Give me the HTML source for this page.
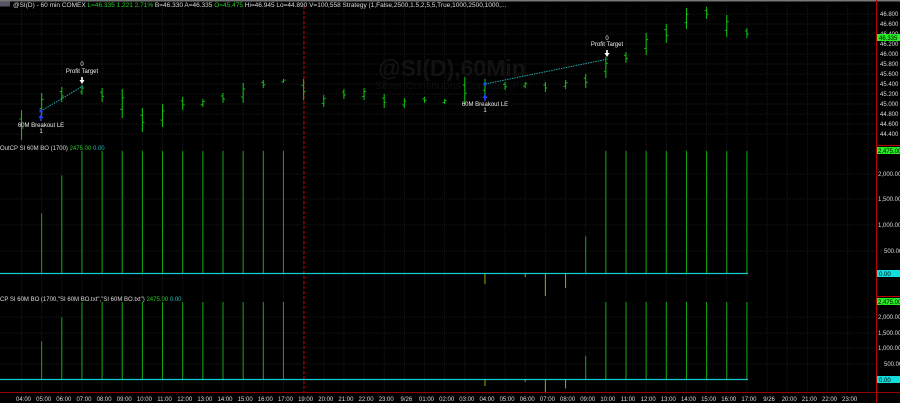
<!DOCTYPE html>
<html><head><meta charset="utf-8"><style>
html,body{margin:0;padding:0;background:#000;width:900px;height:403px;overflow:hidden}
svg{display:block}
text{font-family:"Liberation Sans",sans-serif}
</style></head><body>
<svg id="s" width="900" height="403" viewBox="0 0 900 403" xmlns="http://www.w3.org/2000/svg">
<rect width="900" height="403" fill="#000"/>
<rect width="900" height="1.5" fill="#777"/>
<g id="grid"></g>
<text x="452" y="76" font-size="23" font-weight="bold" fill="#121212" text-anchor="middle">@SI(D),60Min</text>
<text x="452" y="89" font-size="11" fill="#0e0e0e" text-anchor="middle">Silver Continuous Contract (Pit)</text>
<line x1="304" y1="6" x2="304" y2="393" stroke="#c00" stroke-width="1" stroke-dasharray="3,2"/>
<g id="bars"></g>
<!-- header -->
<rect x="0" y="1.5" width="10" height="5" fill="#556"/>
<text x="13" y="7" font-size="6.5" fill="#ddd">@SI(D) - 60 min  COMEX <tspan fill="#2c2">L=46.335  1.221  2.71%</tspan>  B=46.330  A=46.335 <tspan fill="#2c2"> O=45.475</tspan>  Hi=46.945  Lo=44.890  V=100,558  Strategy (1,False,2500,1.5,2,5,5,True,1000,2500,1000,...</text>
<!-- trades -->
<line x1="41" y1="111" x2="83" y2="86" stroke="#2aa" stroke-width="1" stroke-dasharray="1.5,1"/>
<line x1="485" y1="84" x2="608" y2="59" stroke="#2aa" stroke-width="1" stroke-dasharray="1.5,1"/>
<rect x="39.5" y="109.5" width="3" height="3" fill="#24f"/>
<path d="M41 114 L38.5 118 L40.2 118 L40.2 121 L41.8 121 L41.8 118 L43.5 118Z" fill="#24f"/>
<rect x="483.5" y="82.5" width="3" height="3" fill="#24f"/>
<path d="M485 94 L482.5 98 L484.2 98 L484.2 101 L485.8 101 L485.8 98 L487.5 98Z" fill="#24f"/>
<path d="M82 84 L79.5 80 L81.2 80 L81.2 77 L82.8 77 L82.8 80 L84.5 80Z" fill="#fff"/>
<path d="M607 57 L604.5 53 L606.2 53 L606.2 50 L607.8 50 L607.8 53 L609.5 53Z" fill="#fff"/>
<g font-size="6" fill="#eee" text-anchor="middle">
<text x="41" y="127">60M Breakout LE</text><text x="41" y="133">1</text>
<text x="82" y="66">0</text><text x="82" y="73">Profit Target</text>
<text x="485" y="106">60M Breakout LE</text><text x="485" y="112">1</text>
<text x="607" y="40">0</text><text x="607" y="46">Profit Target</text>
</g>
<!-- panel titles -->
<text x="0" y="150" font-size="6" fill="#ddd">OutCP SI 60M BO (1700) <tspan fill="#2c2">  2475.00 </tspan><tspan fill="#2bb"> 0.00</tspan></text>
<text x="0" y="301" font-size="6" fill="#ddd">CP SI 60M BO (1700,"SI 60M BO.txt","SI 60M BO.txt") <tspan fill="#2c2">  2475.00 </tspan><tspan fill="#2bb"> 0.00</tspan></text>
<line x1="0" y1="273.5" x2="748" y2="273.5" stroke="#1cc" stroke-width="1.3"/>
<line x1="0" y1="379.5" x2="748" y2="379.5" stroke="#1cc" stroke-width="1.3"/>
<!-- axis -->
<line x1="876.5" y1="0" x2="876.5" y2="403" stroke="#b00" stroke-width="1"/>
<line x1="876" y1="145.5" x2="900" y2="145.5" stroke="#b00"/>
<line x1="876" y1="296.5" x2="900" y2="296.5" stroke="#b00"/>
<line x1="0" y1="392.5" x2="900" y2="392.5" stroke="#900"/>
<g id="axis" font-size="6" fill="#ddd"></g>
<rect x="877" y="34" width="23" height="7" fill="#2e2"/><text x="879" y="40" font-size="6" fill="#000">46.335</text>
<rect x="877" y="147" width="23" height="7" fill="#2e2"/><text x="878" y="153" font-size="6" fill="#000">2,475.00</text>
<rect x="877" y="270" width="23" height="7" fill="#1dd"/><text x="879" y="276" font-size="6" fill="#000">0.00</text>
<rect x="877" y="298" width="23" height="7" fill="#2e2"/><text x="878" y="304" font-size="6" fill="#000">2,475.00</text>
<rect x="877" y="376" width="23" height="7" fill="#1dd"/><text x="879" y="382" font-size="6" fill="#000">0.00</text>
</svg>
<script>
var NS="http://www.w3.org/2000/svg";
function el(p,t,a,txt){var e=document.createElementNS(NS,t);for(var k in a)e.setAttribute(k,a[k]);if(txt!=null)e.textContent=txt;document.getElementById(p).appendChild(e);}
function X(i){return 21.5+20.15*i;}
for(var i=0;i<43;i++){var x=X(i);el("grid","line",{x1:x,y1:6,x2:x,y2:392,stroke:"#191919","stroke-dasharray":"1,1"});}
for(var p=0;p<13;p++){var y=14+p*10;el("grid","line",{x1:0,y1:y,x2:876,y2:y,stroke:"#171717","stroke-dasharray":"1,1"});
 el("axis","text",{x:880,y:y+2},(46.8-p*0.2).toFixed(3));}
[[174,"2,000.00"],[199,"1,500.00"],[225,"1,000.00"],[251,"500.00"]].forEach(function(a){el("grid","line",{x1:0,y1:a[0],x2:876,y2:a[0],stroke:"#171717","stroke-dasharray":"1,1"});el("axis","text",{x:a[1].length>6?878:884,y:a[0]+2},a[1]);});
[[317,"2,000.00"],[333,"1,500.00"],[348,"1,000.00"],[364,"500.00"]].forEach(function(a){el("grid","line",{x1:0,y1:a[0],x2:876,y2:a[0],stroke:"#171717","stroke-dasharray":"1,1"});el("axis","text",{x:a[1].length>6?878:884,y:a[0]+2},a[1]);});
var b=[[110,140],[93,115],[87,102],[85,95],[88,102],[89,118],[108,132],[104,127],[97,110],[99,107],[93,103],[83,103],[80,88],[79,83],[79,100],[95,107],[89,99],[88,100],[94,108],[98,108],[97,103],[99,104],[77,104],[79,95],[82,90],[82,88],[82,92],[80,89],[74,88],[57,78],[52,63],[33,55],[24,43],[8,29],[7,19],[15,37],[28,38]];
b.forEach(function(r,i){var x=X(i);el("bars","line",{x1:x,y1:r[0],x2:x,y2:r[1],stroke:"#1b1",'stroke-width':1.1});
 var o=r[0]+(r[1]-r[0])*(i%2?0.7:0.3),c=r[0]+(r[1]-r[0])*(i%2?0.3:0.6);
 el("bars","line",{x1:x-2,y1:o,x2:x,y2:o,stroke:"#1b1"});el("bars","line",{x1:x,y1:c,x2:x+2,y2:c,stroke:"#1b1"});});
var f={1:0.49,2:0.8};for(var i=3;i<=13;i++)f[i]=1;f[28]=0.3;for(var i=29;i<=36;i++)f[i]=1;
for(var k in f){var x=X(+k);
 el("bars","line",{x1:x,y1:273-f[k]*122,x2:x,y2:273,stroke:"#1a1",'stroke-width':1});
 el("bars","line",{x1:x,y1:379-f[k]*77,x2:x,y2:379,stroke:"#1a1",'stroke-width':1});}
[[23,10],[25,3],[26,22],[27,14]].forEach(function(a){var x=X(a[0]);
 el("bars","line",{x1:x,y1:274,x2:x,y2:274+a[1],stroke:"#990",'stroke-width':1.1});
 el("bars","line",{x1:x,y1:380,x2:x,y2:380+a[1]*0.6,stroke:"#990",'stroke-width':1.1});});
var L=["04:00","05:00","06:00","07:00","08:00","09:00","10:00","11:00","12:00","13:00","14:00","15:00","16:00","17:00","19:00","20:00","21:00","22:00","23:00","9/26","01:00","02:00","03:00","04:00","05:00","06:00","07:00","08:00","09:00","10:00","11:00","12:00","13:00","14:00","15:00","16:00","17:00","9/26","20:00","21:00","22:00","23:00"];
L.forEach(function(t,i){el("axis","text",{x:X(i)+2,y:401,"text-anchor":"middle"},t);});
</script>
</body></html>
